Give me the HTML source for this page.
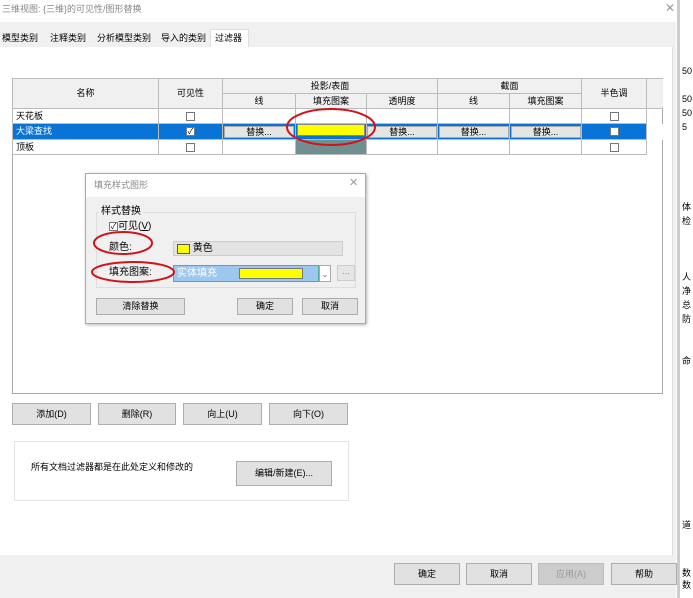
<!DOCTYPE html><html><head><meta charset="utf-8"><style>
*{box-sizing:border-box;margin:0;padding:0}
body{width:693px;height:598px;overflow:hidden;background:#fff;font-family:"Liberation Sans","Noto Sans CJK SC",sans-serif;font-size:9px;line-height:11px;color:#000;position:relative}
.a{position:absolute}
.btn{position:absolute;background:#e1e1e1;border:1px solid #adadad;text-align:center;font-size:9px}
table{border-collapse:collapse;position:absolute;left:12px;top:78px;font-size:9px;table-layout:fixed;width:650px}
td{border:1px solid #bbb;height:15px;text-align:center;padding:0;white-space:nowrap;overflow:hidden}
.cb{display:inline-block;width:9px;height:9px;border:1px solid #777;background:#fff;vertical-align:middle}
.rb{display:inline-block;width:70px;height:12px;border:1px solid #aaa;background:#e5e5e5;line-height:10px}
</style></head><body>
<div class="a" style="left:0;top:0;width:676px;height:22px;background:#fff;color:#888;padding:4px 0 0 2px">三维视图: {三维}的可见性/图形替换</div>
<div class="a" style="left:665px;top:3px;color:#999;font-size:12px">✕</div>
<div class="a" style="left:0;top:22px;width:676px;height:576px;background:#f0f0f0"></div>
<div class="a" style="left:0;top:47px;width:673px;height:508px;background:#fff;border-right:1px solid #ddd"></div>
<div class="a" style="left:2px;top:33px">模型类别</div>
<div class="a" style="left:50px;top:33px">注释类别</div>
<div class="a" style="left:97px;top:33px">分析模型类别</div>
<div class="a" style="left:161px;top:33px">导入的类别</div>
<div class="a" style="left:210px;top:29px;width:39px;height:18px;background:#fff;border:1px solid #ddd;border-bottom:none;padding:3px 0 0 4px">过滤器</div>
<div class="a" style="left:12px;top:78px;width:651px;height:316px;border:1px solid #aaa"></div>
<table>
<colgroup><col style="width:146px"><col style="width:64px"><col style="width:73px"><col style="width:71px"><col style="width:71px"><col style="width:72px"><col style="width:72px"><col style="width:65px"><col style="width:16px"></colgroup>
<tr style="background:#f0f0f0"><td rowspan=2>名称</td><td rowspan=2>可见性</td><td colspan=3>投影/表面</td><td colspan=2>截面</td><td rowspan=2>半色调</td><td rowspan=2 style="border-right:none"></td></tr>
<tr style="background:#f0f0f0"><td>线</td><td>填充图案</td><td>透明度</td><td>线</td><td>填充图案</td></tr>
<tr><td style="text-align:left;padding-left:3px">天花板</td><td><span class="cb"></span></td><td></td><td></td><td></td><td></td><td></td><td><span class="cb"></span></td><td style="border:none"></td></tr>
<tr style="background:#0a74d6;color:#fff"><td style="text-align:left;padding-left:3px">大梁查找</td><td><span class="cb" style="color:#000;font-size:8px;line-height:7px">✓</span></td><td style="color:#000"><span class="rb">替换...</span></td><td><span style="display:inline-block;width:68px;height:12px;background:#ffff00;border:1px solid #888"></span></td><td style="color:#000"><span class="rb">替换...</span></td><td style="color:#000"><span class="rb">替换...</span></td><td style="color:#000"><span class="rb">替换...</span></td><td><span class="cb"></span></td><td style="border:none;background:#fff"></td></tr>
<tr><td style="text-align:left;padding-left:3px">顶板</td><td><span class="cb"></span></td><td></td><td style="background:#6f8f90"></td><td></td><td></td><td></td><td><span class="cb"></span></td><td style="border:none"></td></tr>
</table>
<svg class="a" style="left:0;top:0" width="693" height="598"><ellipse cx="331" cy="127" rx="44" ry="18" fill="none" stroke="#d0141a" stroke-width="2"/></svg>
<div class="a" style="left:85px;top:173px;width:281px;height:151px;background:#f0f0f0;border:1px solid #aaa;box-shadow:1px 1px 3px rgba(0,0,0,.3)">
<div class="a" style="left:0;top:0;width:279px;height:23px;background:#fff;color:#888;padding:6px 0 0 8px">填充样式图形</div>
<div class="a" style="left:263px;top:4px;color:#999;font-size:11px">✕</div>
<div class="a" style="left:10px;top:38px;width:260px;height:76px;border:1px solid #ddd"></div>
<div class="a" style="left:13px;top:32px;background:#f0f0f0;padding:0 2px;font-size:10px;line-height:12px">样式替换</div>
<div class="a" style="left:23px;top:47px;font-size:10px;line-height:12px"><span class="cb" style="font-size:8px;line-height:7px;text-align:center">✓</span>可见(<u>V</u>)</div>
<div class="a" style="left:23px;top:68px;font-size:10px;line-height:12px">颜色:</div>
<div class="a" style="left:87px;top:67px;width:170px;height:15px;background:#e3e3e3;border:1px solid #ccc;padding:1px 0 0 3px;font-size:10px;line-height:12px"><span style="display:inline-block;width:13px;height:10px;background:#ff0;border:1px solid #555;vertical-align:top;margin-top:1px"></span> 黄色</div>
<div class="a" style="left:23px;top:93px;font-size:10px;line-height:12px">填充图案:</div>
<div class="a" style="left:87px;top:91px;width:146px;height:17px;background:#9cc8ef;border:1px solid #5a9;color:#fff;padding:2px 0 0 3px;font-size:10px;line-height:12px">实体填充<span class="a" style="left:65px;top:2px;width:64px;height:11px;background:#ff0;border:1px solid #777"></span></div>
<div class="a" style="left:233px;top:91px;width:12px;height:17px;background:#fff;border:1px solid #aaa;color:#666;font-size:8px;text-align:center;padding-top:3px">⌄</div>
<div class="a" style="left:251px;top:91px;width:18px;height:16px;background:#e6e6e6;border:1px solid #ccc;color:#888;text-align:center">...</div>
<div class="btn" style="left:10px;top:124px;width:89px;height:17px;line-height:15px">清除替换</div>
<div class="btn" style="left:151px;top:124px;width:56px;height:17px;line-height:15px">确定</div>
<div class="btn" style="left:216px;top:124px;width:56px;height:17px;line-height:15px">取消</div>
</div>
<svg class="a" style="left:0;top:0" width="693" height="598"><ellipse cx="123" cy="243" rx="29" ry="11" fill="none" stroke="#d0141a" stroke-width="2"/><ellipse cx="133" cy="272" rx="41" ry="10" fill="none" stroke="#d0141a" stroke-width="2"/></svg>
<div class="btn" style="left:12px;top:403px;width:79px;height:22px;line-height:20px">添加(D)</div>
<div class="btn" style="left:98px;top:403px;width:78px;height:22px;line-height:20px">删除(R)</div>
<div class="btn" style="left:183px;top:403px;width:79px;height:22px;line-height:20px">向上(U)</div>
<div class="btn" style="left:269px;top:403px;width:79px;height:22px;line-height:20px">向下(O)</div>
<div class="a" style="left:14px;top:441px;width:335px;height:60px;border:1px solid #e4e4e4"></div>
<div class="a" style="left:31px;top:462px">所有文档过滤器都是在此处定义和修改的</div>
<div class="btn" style="left:236px;top:461px;width:96px;height:25px;line-height:23px">编辑/新建(E)...</div>
<div class="btn" style="left:394px;top:563px;width:66px;height:22px;line-height:20px">确定</div>
<div class="btn" style="left:466px;top:563px;width:66px;height:22px;line-height:20px">取消</div>
<div class="btn" style="left:538px;top:563px;width:66px;height:22px;line-height:20px;color:#999;background:#ccc;border-color:#bbb">应用(A)</div>
<div class="btn" style="left:611px;top:563px;width:66px;height:22px;line-height:20px">帮助</div>
<div class="a" style="left:677px;top:0;width:16px;height:598px;background:#fff;border-left:3px solid #ccc"></div>
<div class="a" style="left:682px;top:64px;line-height:14px;font-size:9px">50<br><br>50<br>50<br>5</div>
<div class="a" style="left:682px;top:200px;line-height:14px;font-size:9px">体<br>检<br><br><br><br>人<br>净<br>总<br>防<br><br><br>命</div>
<div class="a" style="left:682px;top:520px;font-size:9px">道</div>
<div class="a" style="left:682px;top:567px;font-size:9px;line-height:12px">数<br>数</div>
</body></html>
